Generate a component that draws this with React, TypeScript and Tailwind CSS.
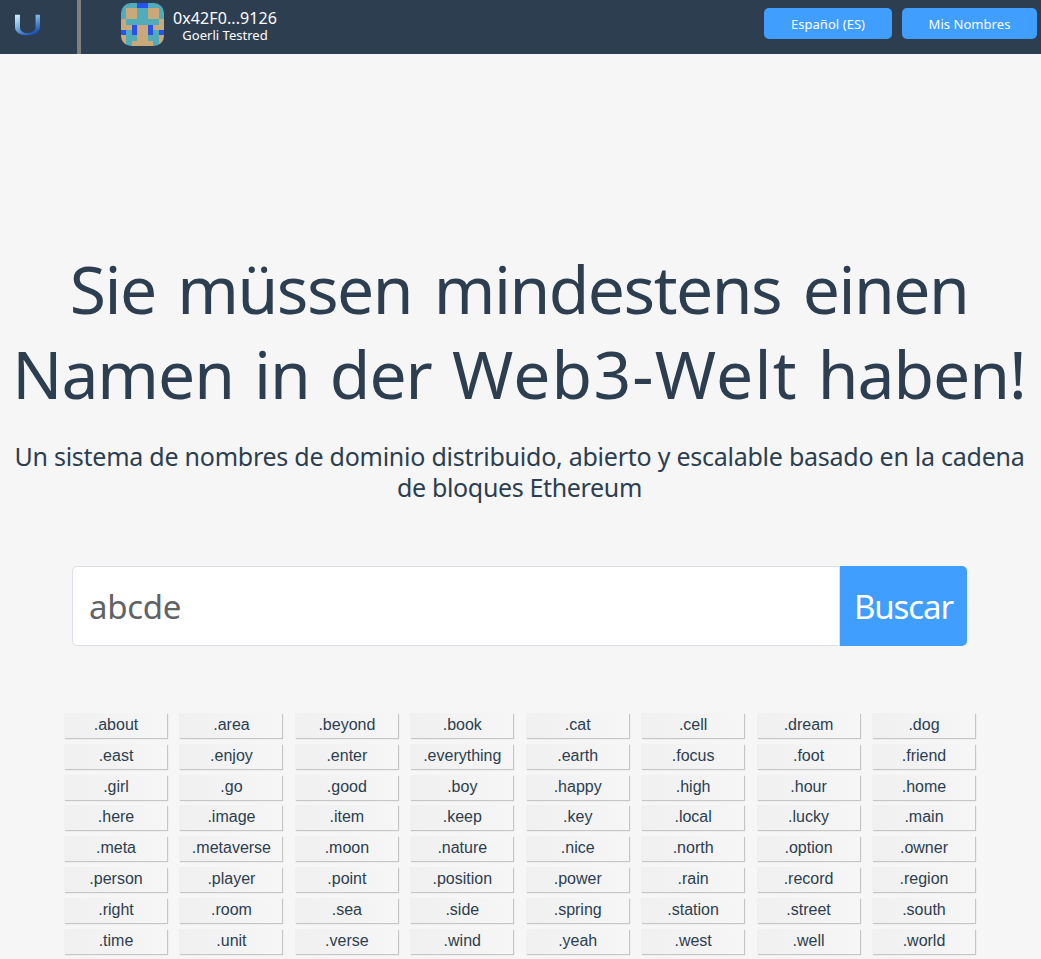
const names: string[] = [
  '.about', '.area', '.beyond', '.book', '.cat', '.cell', '.dream', '.dog',
  '.east', '.enjoy', '.enter', '.everything', '.earth', '.focus', '.foot', '.friend',
  '.girl', '.go', '.good', '.boy', '.happy', '.high', '.hour', '.home',
  '.here', '.image', '.item', '.keep', '.key', '.local', '.lucky', '.main',
  '.meta', '.metaverse', '.moon', '.nature', '.nice', '.north', '.option', '.owner',
  '.person', '.player', '.point', '.position', '.power', '.rain', '.record', '.region',
  '.right', '.room', '.sea', '.side', '.spring', '.station', '.street', '.south',
  '.time', '.unit', '.verse', '.wind', '.yeah', '.west', '.well', '.world',
];

// Left half of each identicon row; the right half mirrors it.
const blockie = ['AAAB', 'ATTA', 'ATTA', 'TAAA', 'TTBT', 'BABT', 'TAAT', 'TATT'];
const tones: Record<string, string> = { A: '#50abbb', B: '#2752f0', T: '#cba877' };

function Identicon() {
  return (
    <svg className="h-[43px] w-[43px] rounded-[10px]" viewBox="0 0 8 8" shapeRendering="crispEdges" aria-hidden="true">
      {blockie.flatMap((row, y) =>
        (row + row.split('').reverse().join('')).split('').map((c, x) => (
          <rect key={`${x}-${y}`} x={x} y={y} width="1" height="1" fill={tones[c]} />
        )),
      )}
    </svg>
  );
}

function Logo() {
  return (
    <svg className="ml-[14px] mt-[14px] h-[22px] w-[27px]" viewBox="0 0 27 22" aria-hidden="true">
      <defs>
        <linearGradient id="u" x1="0" y1="0" x2="0.65" y2="1">
          <stop offset="0" stopColor="#d3f5fd" />
          <stop offset="0.5" stopColor="#76aee0" />
          <stop offset="1" stopColor="#174fb5" />
        </linearGradient>
      </defs>
      <path
        d="M1 .7H6V13C6 17 9 19 13.5 19S21.600 17 21.600 13V.7H26V13C26 18.500 21 21.300 13.500 21.300S1 18.500 1 13Z"
        fill="url(#u)"
      />
    </svg>
  );
}

export default function App() {
  return (
    <div className="h-[959px] w-full overflow-hidden bg-[#f6f6f6] font-['Noto_Sans',sans-serif] text-[#2c3e50]">
      <header className="flex h-[54px] bg-[#2e3e51] text-white">
        <div className="w-[81px] border-r-4 border-[#808080]">
          <Logo />
        </div>
        <div className="ml-[40px] mt-[3px]">
          <Identicon />
        </div>
        <div className="ml-[9px] flex w-[104px] flex-col items-center whitespace-nowrap pt-[8px]">
          <span className="text-[16px] leading-[20px] tracking-[0.1px]">0x42F0...9126</span>
          <span className="text-[13px] leading-[15px] tracking-[0.02px]">Goerli Testred</span>
        </div>
        <div className="ml-auto mr-[4px] mt-[8px] flex gap-[10px] text-[13px]">
          <button className="h-[31px] w-[128px] rounded-[5px] bg-[#409eff] pt-[2px] tracking-[0.05px]">Español (ES)</button>
          <button className="h-[31px] w-[135px] rounded-[5px] bg-[#409eff] pt-[2px] tracking-[0.05px]">Mis Nombres</button>
        </div>
      </header>

      <main className="flex flex-col items-center">
        <h1 className="mr-[3px] mt-[192px] flex flex-col items-center whitespace-nowrap text-[66px] leading-[85px]">
          <span className="tracking-[-1.5px] [word-spacing:6px]">Sie müssen mindestens einen</span>
          <span className="tracking-[-1.05px] [word-spacing:4px]">
            Namen in der <span className="tracking-[1.2px]">Web3-Welt</span> haben!
          </span>
        </h1>
        <p className="mr-[2px] mt-[25px] flex flex-col items-center whitespace-nowrap text-[25px] leading-[31px]">
          <span className="tracking-[-0.25px]">Un sistema de nombres de dominio distribuido, abierto y escalable basado en la cadena</span>
          <span className="tracking-[-0.35px]">de bloques Ethereum</span>
        </p>

        <div className="mr-[2px] mt-[63px] flex h-[80px] w-[895px] text-[33px]">
          <div className="flex flex-1 items-center rounded-l-[5px] border border-[#dcdfe6] bg-white pl-[16px] tracking-[-0.3px] text-[#606266]">
            <span className="pt-px">abcde</span>
          </div>
          <button className="w-[127px] rounded-r-[5px] bg-[#409eff] pt-px tracking-[-1.1px] text-white">Buscar</button>
        </div>

        <div className="mr-[2px] mt-[67px] grid w-[911px] grid-cols-8 gap-x-[12.400px] gap-y-[5.800px] font-['Liberation_Sans',sans-serif] text-[16px]">
          {names.map((name) => (
            <button
              key={name}
              className="h-[25px] bg-linear-to-r from-[#f0f0f0] to-[#f6f6f6] pb-px pl-px leading-[24px] shadow-[1px_1px_1px_#c6c6c6]"
            >
              {name}
            </button>
          ))}
        </div>
      </main>
    </div>
  );
}
